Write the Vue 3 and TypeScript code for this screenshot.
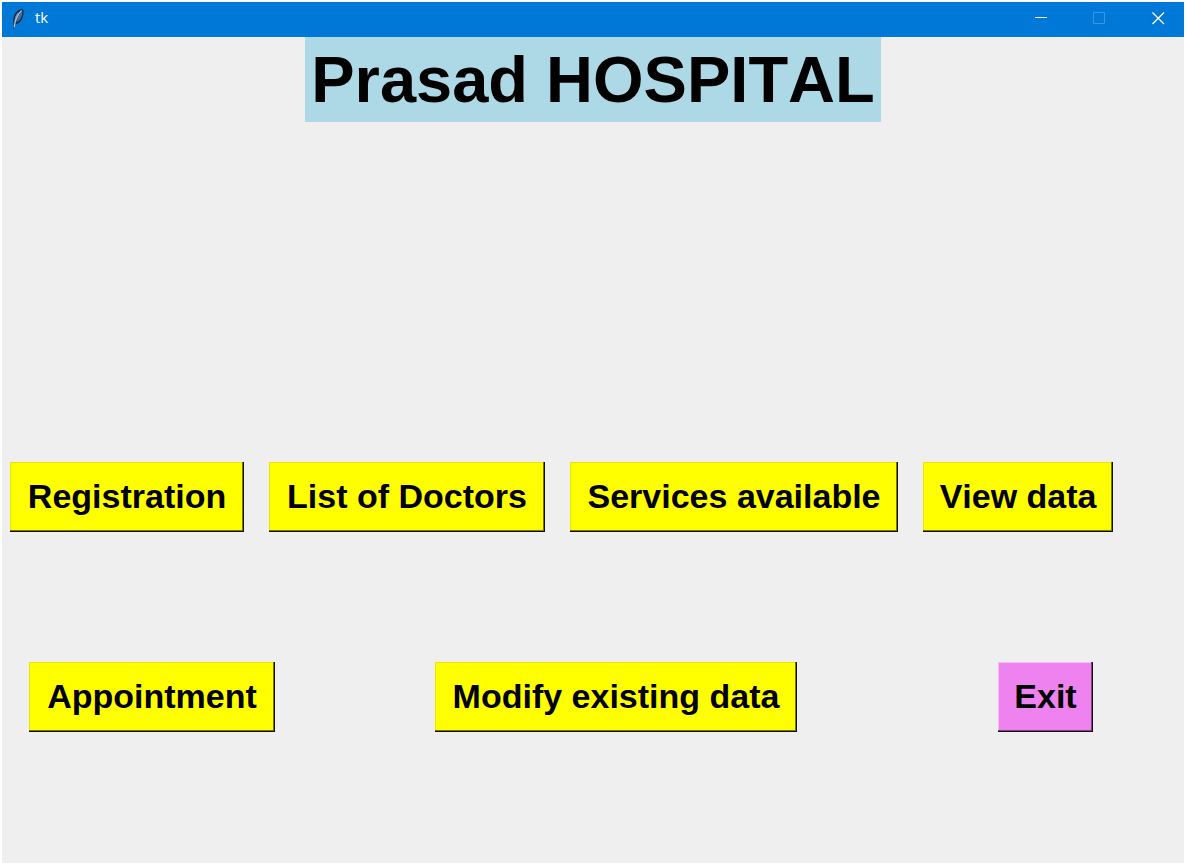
<script setup lang="ts">
interface Action {
  label: string
  tone?: 'exit'
}

const primary: Action[] = [
  { label: 'Registration' },
  { label: 'List of Doctors' },
  { label: 'Services available' },
  { label: 'View data' },
]

const secondary: Action[] = [
  { label: 'Appointment' },
  { label: 'Modify existing data' },
  { label: 'Exit', tone: 'exit' },
]
</script>

<template>
  <div class="window">
    <header class="titlebar">
      <svg class="feather" width="14" height="22" viewBox="0 0 14 22" aria-hidden="true">
        <path d="M2 20.5 2.5 15C1.500 11 3 6 6.500 3 8.500 1.200 11 .8 12 1.500 13 4 12.500 9 10 12.500 8.500 15 6.500 16 4 16.500L3 20.800Z" fill="#14263a" />
        <path d="M3.500 14.500C3 10.500 4.500 6.500 7.500 3.500L7 9Z" fill="#5a86ac" />
        <path d="M5 14.500 7.500 8 11.200 2.300C11.800 5.500 10.800 9 8.800 12Z" fill="#416f99" />
        <path d="M3 19.500C4 13 6.500 6.500 10.500 2.500" fill="none" stroke="#a9c8de" stroke-width="1.200" />
      </svg>
      <span class="caption">tk</span>
      <div class="controls">
        <button type="button" aria-label="Minimize">
          <svg width="13" height="13" viewBox="0 0 13 13"><path d="M1 5.500h12" /></svg>
        </button>
        <button type="button" aria-label="Maximize" disabled>
          <svg width="13" height="13" viewBox="0 0 13 13"><rect x=".5" y=".5" width="11" height="11" rx=".5" /></svg>
        </button>
        <button type="button" aria-label="Close">
          <svg width="13" height="13" viewBox="0 0 13 13"><path d="M.5.5l11.500 11.500M12 .5L.5 12" class="cross" /></svg>
        </button>
      </div>
    </header>

    <main>
      <h1>Prasad HOSPITAL</h1>
      <nav class="row primary">
        <button v-for="a in primary" :key="a.label" type="button" class="action">{{ a.label }}</button>
      </nav>
      <nav class="row secondary">
        <button
          v-for="a in secondary"
          :key="a.label"
          type="button"
          class="action"
          :class="a.tone"
        >{{ a.label }}</button>
      </nav>
    </main>
  </div>
</template>

<style>
body {
  margin: 0;
  background: #fff;
}
</style>

<style scoped>
.window {
  box-sizing: border-box;
  min-height: 100vh;
  border: 2px solid #fff;
  background: #efefef;
  font-family: "Liberation Sans", Arial, sans-serif;
  font-kerning: none;
}

.titlebar {
  display: flex;
  align-items: center;
  box-sizing: border-box;
  height: 35px;
  padding: 0 15px 2px 9px;
  background: #0078d7;
  color: #fff;
}

.feather {
  margin-right: 10px;
}

.caption {
  flex: 1;
  padding-bottom: 4px;
  font-family: "Open Sans", "Noto Sans", sans-serif;
  font-size: 15px;
  line-height: 20px;
}

.controls {
  display: flex;
  gap: 38px;
}

.controls button {
  display: flex;
  justify-content: center;
  align-items: center;
  width: 21px;
  height: 33px;
  padding: 0;
  border: 0;
  background: none;
  color: #fff;
}

.controls button:disabled {
  color: #3b97e0;
}

.controls svg {
  fill: none;
  stroke: currentColor;
  stroke-width: 1;
}

.controls .cross {
  stroke-width: 1.3;
}

main {
  display: flex;
  flex-direction: column;
}

h1 {
  align-self: center;
  margin: 0;
  padding: 0 6px;
  background: #add8e6;
  color: #000;
  font-size: 65px;
  line-height: 85px;
  font-weight: 700;
  white-space: nowrap;
}

.row {
  display: grid;
}

.primary {
  grid-template-columns: 234fr 276fr 328fr 190fr;
  column-gap: 25px;
  margin: 340px 6% 0 8px;
}

.secondary {
  grid-template-columns: 246fr 160fr 362fr 201fr 95fr;
  margin: 130px 91px 0 27px;
}

.secondary .action:nth-child(2) {
  grid-column: 3;
}

.secondary .action:nth-child(3) {
  grid-column: 5;
}

.action {
  height: 70px;
  padding: 0 0 2px;
  border: 0;
  background: #ff0;
  box-shadow: inset -1px -1px #111100, inset -2px -2px #77770a, inset 1px 1px #e6e600;
  color: #000;
  font-family: inherit;
  font-kerning: none;
  font-size: 34px;
  line-height: 40px;
  font-weight: 700;
  white-space: nowrap;
}

.exit {
  background: #ee82ee;
  box-shadow: inset -1px -1px #111, inset -2px -2px #7b427b, inset 1px 1px #f8bcf8;
}
</style>
